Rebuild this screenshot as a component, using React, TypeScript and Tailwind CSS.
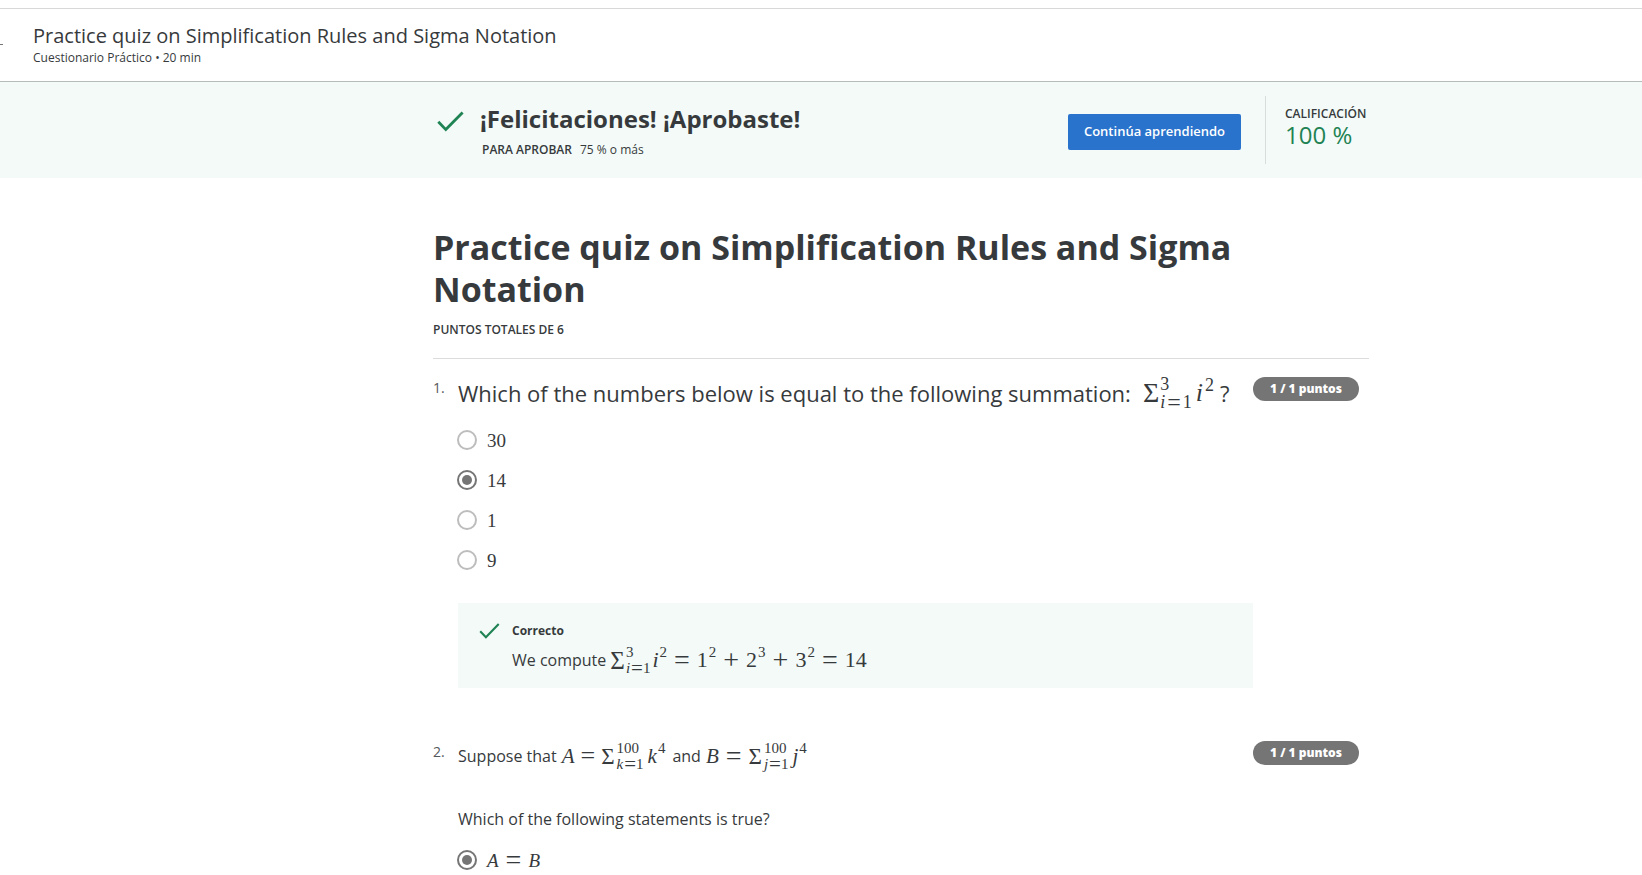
import { Fragment, type ReactNode } from "react";

function CheckIcon({ className }: { className: string }) {
  return (
    <svg viewBox="0 0 27 21" fill="none" aria-hidden="true" className={className}>
      <path d="M1.3 10.8 L8.8 18.6 L25.6 1.4" stroke="#1f8354" strokeWidth="2.8" />
    </svg>
  );
}

function MathText({ className = "", children }: { className?: string; children: ReactNode }) {
  return (
    <span
      className={`inline-flex items-center whitespace-nowrap font-['Liberation_Serif',serif] font-normal leading-none ${className}`}
    >
      {children}
    </span>
  );
}

function Scripts({
  upper,
  index,
  size = "small",
}: {
  upper: string;
  index: string;
  size?: "small" | "large";
}) {
  const large = size === "large";
  return (
    <span
      className={`inline-flex flex-col justify-between ${large ? "h-9 text-[18px]" : "h-[31px] text-[15px]"}`}
    >
      <span>{upper}</span>
      <span className={`inline-flex items-center ${large ? "h-[18px]" : "h-[15px]"}`}>
        <i>{index}</i>
        <span className={large ? "mx-0.5 text-2xl leading-none" : "ml-px text-[21px] leading-none"}>
          =
        </span>
        <span>1</span>
      </span>
    </span>
  );
}

function Operator({ wide = false, children }: { wide?: boolean; children: string }) {
  return (
    <span className={wide ? "mx-[7px] text-[28px] leading-none" : "mx-1.5 text-[26px] leading-none"}>
      {children}
    </span>
  );
}

function Exponent({ children }: { children: string }) {
  return <span className="mb-4 ml-px text-[15px]">{children}</span>;
}

function Choice({
  name,
  checked = false,
  children,
}: {
  name: string;
  checked?: boolean;
  children: ReactNode;
}) {
  return (
    <label className="flex h-10 items-center gap-2.5">
      <input
        type="radio"
        name={name}
        defaultChecked={checked}
        className="-ml-px size-5 shrink-0 appearance-none rounded-full border-2 border-[#bdbdbd] bg-white p-[3px] checked:border-[#757575] checked:bg-[#757575] checked:bg-clip-content"
      />
      <MathText className="text-[19px]">{children}</MathText>
    </label>
  );
}

function Question({ number, children }: { number: number; children: ReactNode }) {
  return (
    <li className="flex items-start">
      <span className="w-[25px] shrink-0 pt-px text-sm leading-5 text-[#55585a]">{number}.</span>
      <div className="min-w-0 flex-1">{children}</div>
      <span className="mr-2.5 flex h-6 w-[106px] shrink-0 items-center justify-center rounded-full bg-[#757575] text-xs font-extrabold text-white">
        1 / 1 puntos
      </span>
    </li>
  );
}

const powers = [
  { base: "1", exponent: "2", after: "+" },
  { base: "2", exponent: "3", after: "+" },
  { base: "3", exponent: "2", after: "=" },
];

export default function App() {
  return (
    <div className="min-h-screen overflow-hidden bg-white font-['Open_Sans',sans-serif] text-[#373a3c]">
      <header className="mt-2 flex h-[74px] items-start border-t border-b border-t-[#d8d8d8] border-b-[#b4bdb9]">
        <span aria-hidden="true" className="mt-[35px] h-px w-[3px] bg-[#757575]" />
        <div className="pt-3.5 pl-[30px]">
          <h2 className="text-xl leading-[26px]">
            Practice quiz on Simplification Rules and Sigma Notation
          </h2>
          <p className="text-xs leading-[18px]">Cuestionario Práctico • 20 min</p>
        </div>
      </header>

      <section className="bg-[#f3faf8] pl-40">
        <div className="mx-auto flex h-24 max-w-[936px] items-start">
          <CheckIcon className="mt-[29px] ml-1 h-[21px] w-[27px]" />
          <div className="flex-1 pt-[21px] pl-4">
            <h2 className="text-2xl leading-8 font-bold">¡Felicitaciones! ¡Aprobaste!</h2>
            <p className="mt-[5px] pl-0.5 text-xs leading-5">
              <span className="mr-2 font-semibold">PARA APROBAR</span>
              <span>75 % o más</span>
            </p>
          </div>
          <button
            type="button"
            className="mt-8 h-9 w-[173px] rounded-xs bg-[#2a73cc] text-[13px] font-semibold text-white"
          >
            Continúa aprendiendo
          </button>
          <div className="mt-3.5 ml-6 flex h-[68px] w-[104px] flex-col border-l border-[#d8dcdb] pt-[9px] pl-[19px]">
            <span className="text-xs leading-[18px] font-semibold">CALIFICACIÓN</span>
            <span className="text-2xl leading-6 text-[#1f8354]">100 %</span>
          </div>
        </div>
      </section>

      <main className="pl-40">
        <div className="mx-auto max-w-[936px] pt-12">
          <div className="border-b border-[#dcdcdc] pb-[19px]">
            <h1 className="text-[34px] leading-[42px] font-bold">
              Practice quiz on Simplification Rules and Sigma Notation
            </h1>
            <p className="mt-[11px] text-xs leading-[18px] font-semibold">PUNTOS TOTALES DE 6</p>
          </div>

          <ol className="flex flex-col gap-[53px] pt-[18px]">
            <Question number={1}>
              <div className="flex h-8 items-center text-[22px] whitespace-nowrap">
                Which of the numbers below is equal to the following summation:
                <MathText className="ml-3 text-[26px]">
                  <span className="mr-px text-[28px]">Σ</span>
                  <Scripts size="large" upper="3" index="i" />
                  <i className="ml-1">i</i>
                  <span className="mb-4 ml-0.5 text-[18px]">2</span>
                </MathText>
                <span className="ml-1.5">?</span>
              </div>
              <fieldset className="mt-[11px]">
                <Choice name="q1">30</Choice>
                <Choice name="q1" checked>
                  14
                </Choice>
                <Choice name="q1">1</Choice>
                <Choice name="q1">9</Choice>
              </fieldset>
              <div className="mt-[23px] flex h-[85px] items-start bg-[#f3faf8] pt-[18px] pl-[21px]">
                <CheckIcon className="mt-0.5 h-4 w-[21px]" />
                <div className="pl-3">
                  <p className="text-xs leading-5 font-bold">Correcto</p>
                  <div className="mt-px flex h-9 items-center text-base">
                    We compute
                    <MathText className="ml-1 text-[22px]">
                      <span className="mr-px text-[25px]">Σ</span>
                      <Scripts upper="3" index="i" />
                      <i className="ml-0.5">i</i>
                      <Exponent>2</Exponent>
                      <Operator wide>=</Operator>
                      {powers.map((term, index) => (
                        <Fragment key={index}>
                          <span>{term.base}</span>
                          <Exponent>{term.exponent}</Exponent>
                          <Operator wide>{term.after}</Operator>
                        </Fragment>
                      ))}
                      14
                    </MathText>
                  </div>
                </div>
              </div>
            </Question>

            <Question number={2}>
              <div className="flex h-[30px] items-center text-base">
                Suppose that
                <MathText className="ml-[5px] text-[21px]">
                  <i>A</i>
                  <Operator>=</Operator>
                  <span className="mr-0.5 text-[23px]">Σ</span>
                  <Scripts upper="100" index="k" />
                  <i className="ml-1">k</i>
                  <Exponent>4</Exponent>
                </MathText>
                <span className="mr-[5px] ml-[7px]">and</span>
                <MathText className="text-[21px]">
                  <i>B</i>
                  <Operator wide>=</Operator>
                  <span className="mr-0.5 text-[23px]">Σ</span>
                  <Scripts upper="100" index="j" />
                  <i className="ml-1">j</i>
                  <Exponent>4</Exponent>
                </MathText>
              </div>
              <p className="mt-9 text-base leading-6">
                Which of the following statements is true?
              </p>
              <fieldset className="mt-[9px]">
                <Choice name="q2" checked>
                  <i>A</i>
                  <Operator wide>=</Operator>
                  <i>B</i>
                </Choice>
              </fieldset>
            </Question>
          </ol>
        </div>
      </main>
    </div>
  );
}
